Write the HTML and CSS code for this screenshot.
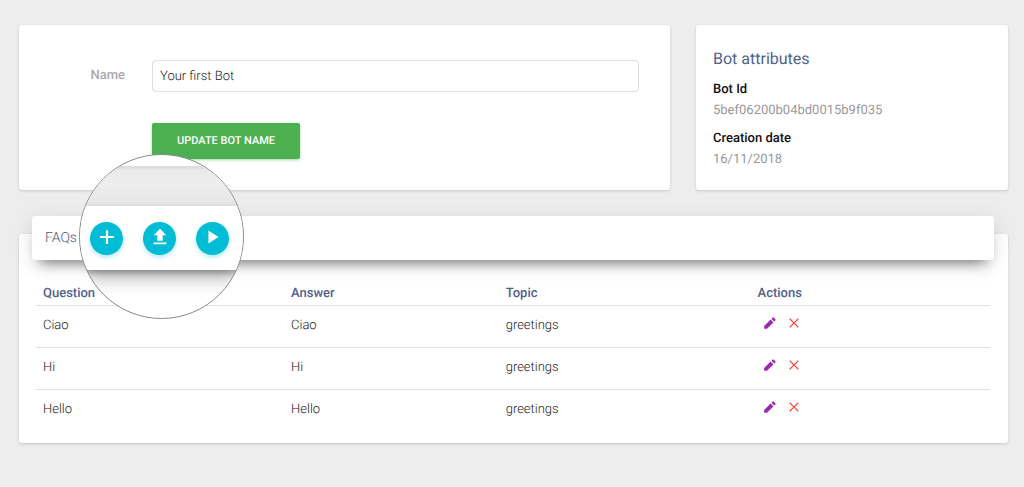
FILE: index.html
```html
<!DOCTYPE html>
<html lang="en">
<head>
<meta charset="utf-8">
<meta name="viewport" content="width=device-width, initial-scale=1">
<title>Your first Bot</title>
<link rel="stylesheet" href="styles.css">
</head>
<body>
<svg class="sprite" aria-hidden="true">
  <symbol id="pencil" viewBox="0 0 24 24"><path d="M2 17.250V22h4.750L17.810 10.940l-4.750-4.750L2 17.250zM21.400 7.350a1 1 0 0 0 0-1.410l-3.340-3.340a1 1 0 0 0-1.410 0l-2.200 2.200 4.750 4.750z"/></symbol>
  <symbol id="cross" viewBox="0 0 24 24"><path d="M20 5.410L18.590 4 12 10.590 5.410 4 4 5.410 10.590 12 4 18.590 5.410 20 12 13.410 18.590 20 20 18.590 13.410 12z"/></symbol>
</svg>
<main class="page">
  <div class="top">
    <form class="card bot-form">
      <label class="label" for="bot-name">Name</label>
      <input class="field" id="bot-name" type="text" value="Your first Bot">
      <button class="update" type="button">UPDATE BOT NAME</button>
    </form>
    <section class="card attributes">
      <h2 class="attributes-title">Bot attributes</h2>
      <dl class="list">
        <dt>Bot Id</dt>
        <dd>5bef06200b04bd0015b9f035</dd>
        <dt>Creation date</dt>
        <dd>16/11/2018</dd>
      </dl>
    </section>
  </div>
  <section class="card faqs">
    <header class="faqs-header">
      <h2 class="faqs-title">FAQs</h2>
      <div class="lens">
        <div class="lens-backdrop"></div>
        <div class="lens-bar">
          <button class="round" type="button" aria-label="Add"><svg viewBox="0 0 24 24"><path d="M19.500 13.200h-6.300v6.300h-2.400v-6.300H4.500v-2.400h6.300V4.500h2.400v6.300h6.300z"/></svg></button>
          <button class="round" type="button" aria-label="Upload"><svg viewBox="0 0 24 24"><path d="M9 16h6v-6h4l-7-7-7 7h4zm-4 2h14v2H5z"/></svg></button>
          <button class="round" type="button" aria-label="Play"><svg viewBox="0 0 24 24"><path d="M7 5v14l11-7z"/></svg></button>
        </div>
      </div>
    </header>
    <table class="table">
      <thead>
        <tr><th class="c-question">Question</th><th class="c-answer">Answer</th><th class="c-topic">Topic</th><th>Actions</th></tr>
      </thead>
      <tbody>
        <tr><td>Ciao</td><td>Ciao</td><td>greetings</td><td><div class="actions"><button class="icon edit" type="button" aria-label="Edit"><svg><use href="#pencil"/></svg></button><button class="icon delete" type="button" aria-label="Delete"><svg><use href="#cross"/></svg></button></div></td></tr>
        <tr><td>Hi</td><td>Hi</td><td>greetings</td><td><div class="actions"><button class="icon edit" type="button" aria-label="Edit"><svg><use href="#pencil"/></svg></button><button class="icon delete" type="button" aria-label="Delete"><svg><use href="#cross"/></svg></button></div></td></tr>
        <tr><td>Hello</td><td>Hello</td><td>greetings</td><td><div class="actions"><button class="icon edit" type="button" aria-label="Edit"><svg><use href="#pencil"/></svg></button><button class="icon delete" type="button" aria-label="Delete"><svg><use href="#cross"/></svg></button></div></td></tr>
      </tbody>
    </table>
  </section>
</main>
</body>
</html>
```
FILE: styles.css
```css
* { box-sizing: border-box; }
body {
  margin: 0;
  background: #ededed;
  color: #222;
  font: 300 13px/20px Roboto, "Liberation Sans", sans-serif;
  text-rendering: geometricPrecision;
}
button, input { font: inherit; color: inherit; text-rendering: inherit; }
button { border: 0; padding: 0; background: none; cursor: pointer; }
svg { display: block; fill: currentColor; }
.sprite { position: absolute; width: 0; height: 0; }

.page { padding: 25px 16px 24px 19px; }
.card {
  background: #fff;
  border-radius: 3px;
  box-shadow: 0 1px 3px rgba(0, 0, 0, .16);
}
.top {
  display: grid;
  grid-template-columns: 651fr 312fr;
  gap: 26px;
}
.bot-form {
  display: grid;
  grid-template-columns: 106px 1fr;
  column-gap: 27px;
  row-gap: 31px;
  align-items: center;
  justify-items: end;
  padding: 35px 31px 31px 0;
}
.label { color: #aaa; font-weight: 500; }
.field {
  width: 100%;
  height: 32px;
  padding: 0 7px;
  border: 1px solid #ddd;
  border-radius: 4px;
  background: #fff;
}
.update {
  grid-column: 2;
  justify-self: start;
  height: 36px;
  padding: 0 25px;
  border-radius: 2px;
  background: #4caf50;
  color: #fff;
  font-size: 11px;
  font-weight: 500;
  box-shadow: 0 1px 3px rgba(76, 175, 80, .5);
}
.attributes { padding: 24px 17px 11px; }
.attributes-title {
  margin: 0 0 11px;
  color: #50628c;
  font-size: 16px;
  font-weight: 400;
}
.list { margin: 0; }
.list dt { color: #111; font-weight: 500; }
.list dd { margin: 1px 0 8px; color: #999; font-weight: 400; }

.faqs { margin-top: 44px; padding: 0 18px 12px 17px; }
.faqs-header {
  position: relative;
  display: flex;
  align-items: center;
  height: 44px;
  margin: 0 -4px;
  padding: 0 13px;
  border-radius: 3px;
  background: #fff;
  box-shadow: 0 10px 14px -8px rgba(0, 0, 0, .55), 0 4px 22px rgba(0, 0, 0, .1);
  top: -18px;
}
.faqs-title {
  margin: 0;
  color: #50587c;
  font-size: 14px;
  font-weight: 300;
}
.lens {
  position: absolute;
  left: 47px;
  top: -62px;
  width: 165px;
  height: 165px;
  padding-top: 11px;
  overflow: hidden;
  border: 1px solid #888;
  border-radius: 50%;
  background: #fff;
}
.lens-backdrop {
  height: 40px;
  background: linear-gradient(#dadada, #ebebeb 5px, #ededed 20px, #e6e6e6);
}
.lens-bar {
  display: flex;
  align-items: center;
  gap: 20px;
  height: 64px;
  padding: 0 10px;
  background: #fff;
  box-shadow: 0 14px 18px -6px rgba(0, 0, 0, .3), 0 3px 6px rgba(0, 0, 0, .3);
}
.round {
  display: grid;
  flex: none;
  place-items: center;
  width: 33px;
  height: 33px;
  padding-bottom: 2px;
  border-radius: 50%;
  background: #00bcd4;
  color: #fff;
  box-shadow: 0 2px 4px rgba(0, 188, 212, .35);
}
.round svg { width: 22px; height: 22px; }

.table {
  width: 100%;
  border-collapse: collapse;
  table-layout: fixed;
  text-align: left;
}
.table th {
  height: 27px;
  padding: 5px 7px 0;
  color: #50628c;
  font-weight: 500;
}
.table td {
  height: 42px;
  padding: 0 7px;
  border-top: 1px solid #e2e2e2;
}
.c-question { width: 26%; }
.c-answer { width: 22.5%; }
.c-topic { width: 26.4%; }
.actions { display: flex; gap: 10px; padding: 0 0 6px 5px; }
.icon svg { width: 14px; height: 14px; }
.edit { color: #9c27b0; }
.delete { color: #f44336; }
```
